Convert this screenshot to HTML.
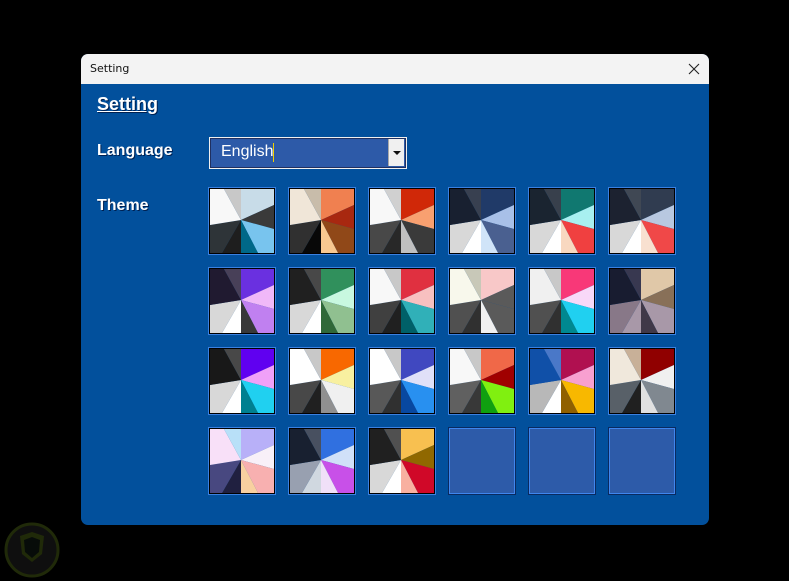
<!DOCTYPE html>
<html><head><meta charset="utf-8"><style>
html,body{margin:0;padding:0;background:#000;width:789px;height:581px;overflow:hidden;font-family:"Liberation Sans",sans-serif;}
.dlg{position:absolute;left:81px;top:54px;width:628px;height:471px;border-radius:7px;overflow:hidden;background:#02509c;}
.tb{position:absolute;left:0;top:0;width:628px;height:30px;background:#f3f3f3;}
.tb span{position:absolute;left:9px;top:8px;color:#111;font-family:"DejaVu Sans","Liberation Sans",sans-serif;font-size:11px;}
.lbl{position:absolute;color:#fff;font-weight:bold;font-size:16px;text-shadow:1px 1px 0 #002050;}
.combo{position:absolute;left:128px;top:83px;width:196px;height:30px;border:1px solid #f0f0f0;box-shadow:inset 0 0 0 1px #203060;background:#2d5aa8;}
.combo .t{position:absolute;left:11px;top:5px;color:#fff;font-size:16px;}
.combo .caret{position:absolute;left:63px;top:5px;width:1px;height:19px;background:#f0d000;}
.combo .btn{position:absolute;right:2px;top:1px;width:15px;height:27px;background:#f0f0f0;border-left:1px solid #aaa;}
.combo .btn:after{content:"";position:absolute;left:4px;top:12px;border-left:4px solid transparent;border-right:4px solid transparent;border-top:4px solid #111;}
.tile{position:absolute;width:64px;height:64px;border:1px solid #000;outline:1px solid #3a80e0;}
.tile svg{display:block}
.empty{background:#2d5ba9;border:1px solid #3f86ee;outline:1px solid #0a2a60;}
</style></head><body>
<div class="dlg">
<div class="tb"><span>Setting</span>
<svg style="position:absolute;left:607px;top:9px" width="12" height="12"><path d="M1 1L11 11M11 1L1 11" stroke="#222" stroke-width="1.1"/></svg></div>
<div class="lbl" style="left:16px;top:40px;font-size:18px;text-decoration:underline;">Setting</div>
<div class="lbl" style="left:16px;top:88px;">Language</div>
<div class="lbl" style="left:16px;top:143px;">Theme</div>
<div class="combo"><span class="t">English</span><span class="caret"></span><span class="btn"></span></div>
<div id="tiles"></div>
</div>
<svg style="position:absolute;left:4px;top:522px;opacity:.3" width="56" height="56"><circle cx="28" cy="28" r="26" fill="#333" stroke="#6a8a20" stroke-width="3"/><path d="M16 14L28 10L40 14L38 32L28 40L18 32Z" fill="#6a8a20"/><path d="M20 18L28 15L36 18L35 30L28 36L21 30Z" fill="#1a2a20"/></svg>
<script>
var T=[
["#c8dce8","#3a3a3a","#78c4ee","#006888","#1e1e1e","#2e3438","#f8f8f8","#c8c8c8"],
["#f08050","#a82810","#904818","#f8c890","#080808","#303030","#f0e6d8","#c8bcaa"],
["#d02808","#f8a070","#3a3a3a","#c0c0c0","#282828","#484848","#f8f8f8","#d0d0d0"],
["#203a68","#a8c0e8","#4a6090","#d0e4f8","#ffffff","#d8d8d8","#182030","#384050"],
["#107870","#a8f0f0","#f04040","#f8d8c0","#ffffff","#d8d8d8","#1a2430","#38404c"],
["#303c50","#b8c8e0","#f04848","#f8e0d0","#ffffff","#d8d8d8","#1c2230","#404854"],
["#6a30e0","#f0b8f8","#c080f0","#383838","#ffffff","#d8d8d8","#201a30","#484058"],
["#30905c","#c8f8e0","#90c090","#306838","#ffffff","#d8d8d8","#202020","#484848"],
["#e03040","#f8c0c0","#30b0b8","#006068","#202020","#404040","#f8f8f8","#c8c8c8"],
["#f8c8c8","#5a5a5a","#5a5a5a","#f0f0f0","#303030","#505050","#f8f8ec","#c8c8b8"],
["#f83878","#f8d8f8","#20d0f0","#008890","#303030","#505050","#f0f0f0","#c8c8c8"],
["#e0c8a8","#887058","#a898a8","#403848","#a898a8","#887888","#181c30","#383850"],
["#6000f0","#f0a0f8","#20d0f0","#008090","#ffffff","#d8d8d8","#181818","#484848"],
["#f86800","#f8f0a0","#f0f0f0","#909090","#202020","#484848","#ffffff","#c8c8c8"],
["#4048c0","#e0e0f8","#2890f0","#0848a0","#303030","#585858","#ffffff","#c8c8c8"],
["#f06848","#a00000","#80f010","#10a010","#383838","#606060","#f8f8f8","#c8c8c8"],
["#b01050","#f8a0d0","#f8b800","#906000","#ffffff","#b8b8b8","#1050a8","#4a78c8"],
["#900000","#f0f0f0","#808890","#e0e0e0","#202020","#586068","#f0e8dc","#c8b098"],
["#b8b0f8","#f8f0f8","#f8b0b0","#f8d0a0","#202040","#484880","#f8e0f8","#b8e0f8"],
["#3070e0","#d0e0f8","#c850e8","#f0e0f8","#d0d8e0","#98a0b0","#182030","#485060"],
["#f8c050","#906800","#d00828","#f8b0a0","#ffffff","#d8d8d8","#202020","#505050"]];
var P=["31,0 64,0 64,16","64,16 64,40","64,40 64,64 48,64","48,64 31,64","31,64 12,64","12,64 0,64 0,36","0,36 0,0 14,0","14,0 31,0"];
var h="";
for(var i=0;i<24;i++){var r=Math.floor(i/6),c=i%6,x=128+c*80,y=134+r*80;
if(i<T.length){var s='<svg width="64" height="64" viewBox="0 0 64 64">';for(var k=0;k<8;k++)s+='<polygon points="31,31 '+P[k]+'" fill="'+T[i][k]+'"/>';s+='</svg>';
h+='<div class="tile" style="left:'+x+'px;top:'+y+'px">'+s+'</div>';}
else h+='<div class="tile empty" style="left:'+x+'px;top:'+y+'px"></div>';}
document.getElementById("tiles").innerHTML=h;
</script>
</body></html>
